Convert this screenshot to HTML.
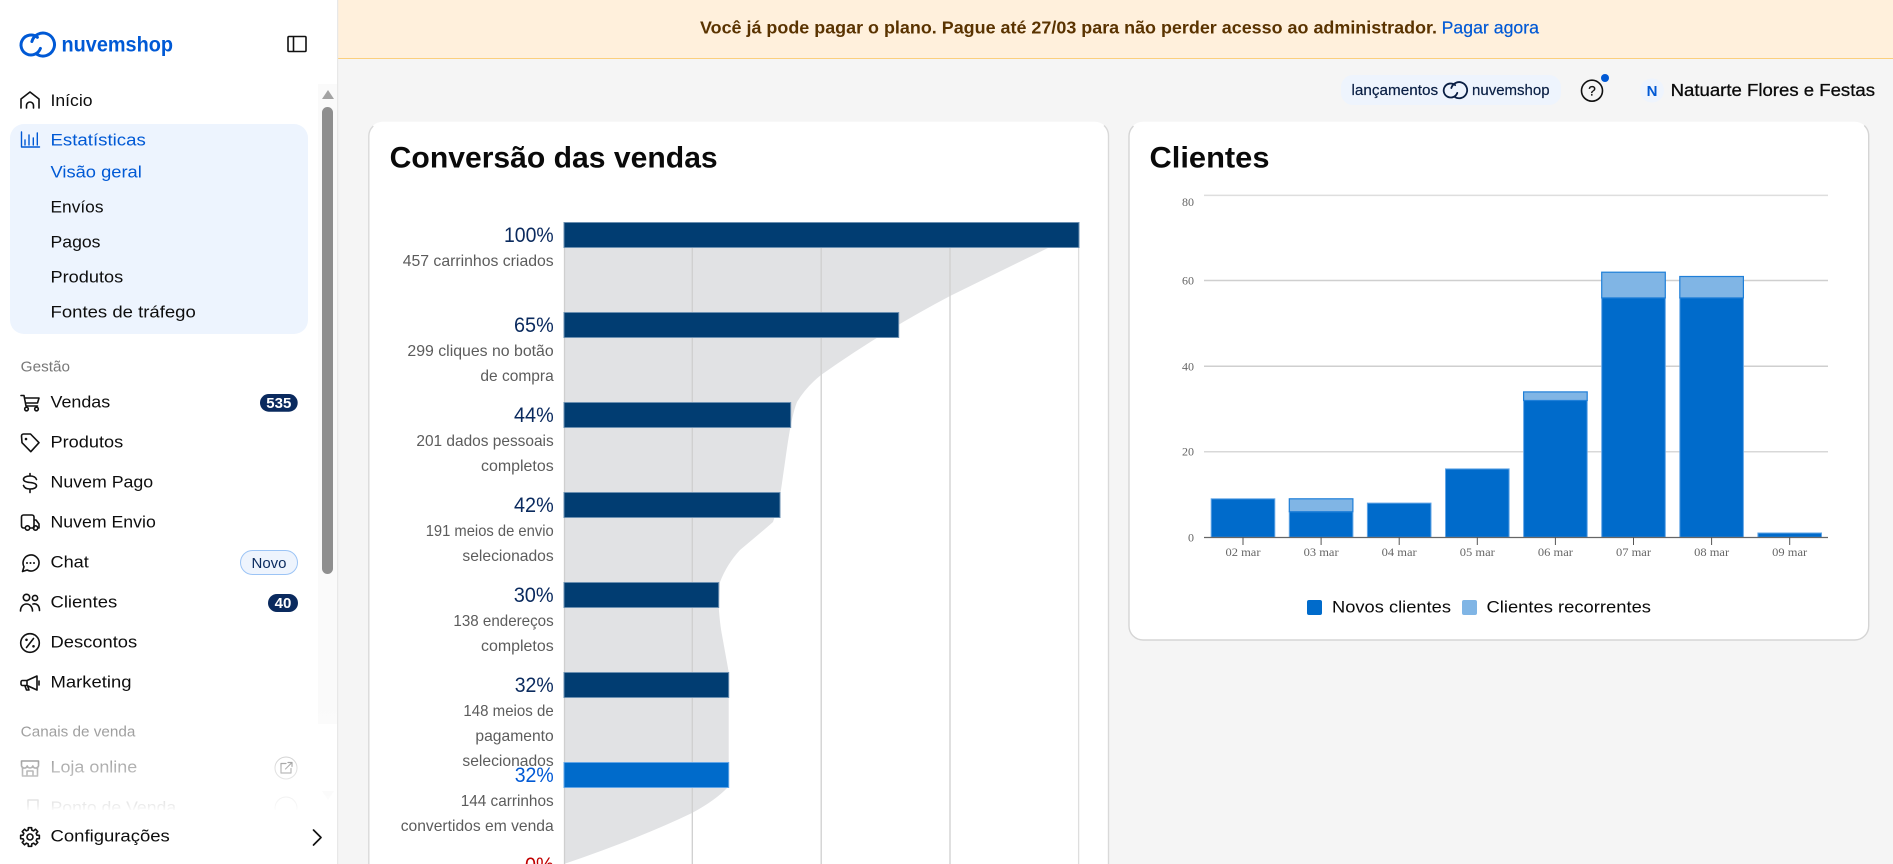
<!DOCTYPE html>
<html lang="pt-BR">
<head>
<meta charset="utf-8">
<title>Nuvemshop - Estatísticas</title>
<style>
html,body{margin:0;padding:0;width:1893px;height:864px;overflow:hidden;background:#f5f5f5}
svg{display:block}
text{font-family:"Liberation Sans",sans-serif}
.nav{font-size:17px;fill:#0d0d0d}
.act{font-size:17px;fill:#0059d5}
.sec{font-size:15px;fill:#777}
.ic{fill:none;stroke:#111;stroke-width:1.6;stroke-linecap:round;stroke-linejoin:round}
.pct{font-size:21px;fill:#0a2a5e;text-anchor:end;transform:translateY(-.8px)}
.sub{font-size:16px;fill:#5c5c5c;text-anchor:end;transform:translateY(-.7px)}
.ax{font-family:"Liberation Serif",serif;font-size:12px;fill:#666}
.axr{font-family:"Liberation Serif",serif;font-size:12px;fill:#666;text-anchor:end}
.gx{stroke:#cfcfcf;stroke-width:1.3}
.gy{stroke:#cfcfcf;stroke-width:1.5}
.nb{fill:#013d72;stroke:#6b8fb0;stroke-width:1}
.nw{fill:#006bcb;stroke:#62a5e6;stroke-width:1}
.rc{fill:#80b5e5;stroke:#1f7fd8;stroke-width:1.2}
.tk{stroke:#555;stroke-width:1}
</style>
</head>
<body>
<svg width="1893" height="864" viewBox="0 0 1893 864" xmlns="http://www.w3.org/2000/svg">
<defs>
<linearGradient id="fade" x1="0" y1="0" x2="0" y2="1">
<stop offset="0" stop-color="#fff" stop-opacity="0"/>
<stop offset="0.29" stop-color="#fff" stop-opacity="0.3"/>
<stop offset="0.6" stop-color="#fff" stop-opacity="0.68"/>
<stop offset="0.94" stop-color="#fff" stop-opacity="0.92"/>
<stop offset="1" stop-color="#fff" stop-opacity="1"/>
</linearGradient>
</defs>

<rect x="0" y="0" width="1893" height="864" fill="#f5f5f5"/>

<!-- banner -->
<g>
<rect x="338" y="0" width="1555" height="58" fill="#fff0dc"/>
<rect x="338" y="58" width="1555" height="1" fill="#fbcf7d"/>
<text x="700" y="33.5" font-size="17.6" font-weight="700" fill="#5a3300" textLength="737" lengthAdjust="spacingAndGlyphs">Você já pode pagar o plano. Pague até 27/03 para não perder acesso ao administrador.</text>
<text x="1441.6" y="33.5" font-size="17.6" fill="#0059d5" stroke="#0059d5" stroke-width=".2" textLength="97.4" lengthAdjust="spacingAndGlyphs">Pagar agora</text>
</g>

<!-- header -->
<g>
<rect x="1341" y="75" width="220" height="30" rx="12" fill="#eef4fd"/>
<text x="1351.5" y="95" font-size="15" fill="#0a1f44" stroke="#0a1f44" stroke-width=".2" textLength="86.6" lengthAdjust="spacingAndGlyphs">lançamentos</text>
<g fill="none" stroke="#0a1f44" stroke-width="2.6" stroke-linecap="round" transform="translate(1429 59) scale(.7)">
<path d="M37.400 37.300A10 10 0 1 0 40.400 48.400"/>
<path d="M31.900 41.500A11.500 11.500 0 1 1 37.250 54.500"/>
</g>
<text x="1472" y="95" font-size="15" fill="#0a1f44" stroke="#0a1f44" stroke-width=".2" textLength="77.6" lengthAdjust="spacingAndGlyphs">nuvemshop</text>
<circle cx="1592" cy="90.700" r="10.500" fill="none" stroke="#111" stroke-width="1.600"/>
<text x="1592" y="95.500" font-size="13.500" fill="#111" stroke="#111" stroke-width=".3" text-anchor="middle">?</text>
<circle cx="1605" cy="78" r="4" fill="#0059d5"/>
<circle cx="1652" cy="90.500" r="12" fill="#eef4fd"/>
<text x="1652" y="96" font-size="15" font-weight="700" fill="#0059d5" text-anchor="middle">N</text>
<text x="1670.600" y="96" font-size="17.400" fill="#0a0a0a" stroke="#0a0a0a" stroke-width=".3" textLength="204.4" lengthAdjust="spacingAndGlyphs">Natuarte Flores e Festas</text>
</g>

<!-- funnel card -->
<g>
<rect x="368.700" y="121.700" width="740" height="760" rx="14" fill="#fff"/>
<path d="M368.800 880V136a14 14 0 0 1 4.500-10M1104 125.500a14 14 0 0 1 4.500 10.500V880" fill="none" stroke="#d9d9d9" stroke-width="1.400"/>
<text x="389.700" y="167.500" font-size="30" font-weight="700" fill="#0a0a0a" textLength="328" lengthAdjust="spacingAndGlyphs">Conversão das vendas</text>

<path fill="#e1e2e4" d="M564 247H1050L950 296Q880 333 821 375Q806 387 797 402C790 420 787 450 782 483Q779 505 773 522Q764 530 740 550Q727 564 720 582L718.700 607Q720 625 722 635L728.700 672V787H728Q716 800 692 813Q640 838 564 864Z"/>
<line class="gx" x1="564.500" y1="222" x2="564.500" y2="864"/>
<line class="gx" x1="692.300" y1="222" x2="692.300" y2="864"/>
<line class="gx" x1="821.200" y1="222" x2="821.200" y2="864"/>
<line class="gx" x1="950" y1="222" x2="950" y2="864"/>
<line class="gx" x1="1078.600" y1="222" x2="1078.600" y2="864" style="stroke:#dedede"/>

<rect class="nb" x="564" y="222.500" width="515" height="25"/>
<rect class="nb" x="564" y="312.500" width="334.700" height="25"/>
<rect class="nb" x="564" y="402.500" width="226.700" height="25"/>
<rect class="nb" x="564" y="492.500" width="216" height="25"/>
<rect class="nb" x="564" y="582.500" width="154.700" height="25"/>
<rect class="nb" x="564" y="672.500" width="164.700" height="25"/>
<rect x="564" y="762.500" width="164.700" height="25" fill="#006bcb" stroke="#62a5e6" stroke-width="1"/>

<text class="pct" x="553.700" y="242.700" textLength="49.700" lengthAdjust="spacingAndGlyphs">100%</text>
<text class="sub" x="553.700" y="266.700" textLength="151" lengthAdjust="spacingAndGlyphs">457 carrinhos criados</text>

<text class="pct" x="553.700" y="332.700" textLength="39.700" lengthAdjust="spacingAndGlyphs">65%</text>
<text class="sub" x="553.700" y="356.700" textLength="146.300" lengthAdjust="spacingAndGlyphs">299 cliques no botão</text>
<text class="sub" x="553.700" y="381.700" textLength="73.300" lengthAdjust="spacingAndGlyphs">de compra</text>

<text class="pct" x="553.700" y="422.700" textLength="39.700" lengthAdjust="spacingAndGlyphs">44%</text>
<text class="sub" x="553.700" y="446.700" textLength="137.300" lengthAdjust="spacingAndGlyphs">201 dados pessoais</text>
<text class="sub" x="553.700" y="471.700" textLength="72.700" lengthAdjust="spacingAndGlyphs">completos</text>

<text class="pct" x="553.700" y="512.700" textLength="39.700" lengthAdjust="spacingAndGlyphs">42%</text>
<text class="sub" x="553.700" y="536.700" textLength="128" lengthAdjust="spacingAndGlyphs">191 meios de envio</text>
<text class="sub" x="553.700" y="561.700" textLength="91.300" lengthAdjust="spacingAndGlyphs">selecionados</text>

<text class="pct" x="553.700" y="602.700" textLength="40" lengthAdjust="spacingAndGlyphs">30%</text>
<text class="sub" x="553.700" y="626.700" textLength="100.300" lengthAdjust="spacingAndGlyphs">138 endereços</text>
<text class="sub" x="553.700" y="651.700" textLength="72.700" lengthAdjust="spacingAndGlyphs">completos</text>

<text class="pct" x="553.700" y="692.700" textLength="39" lengthAdjust="spacingAndGlyphs">32%</text>
<text class="sub" x="553.700" y="716.700" textLength="90.300" lengthAdjust="spacingAndGlyphs">148 meios de</text>
<text class="sub" x="553.700" y="741.700" textLength="78.300" lengthAdjust="spacingAndGlyphs">pagamento</text>
<text class="sub" x="553.700" y="766.700" textLength="91.300" lengthAdjust="spacingAndGlyphs">selecionados</text>

<text class="pct" x="553.700" y="782.700" textLength="39" lengthAdjust="spacingAndGlyphs" style="fill:#0059d5">32%</text>
<text class="sub" x="553.700" y="806.700" textLength="93" lengthAdjust="spacingAndGlyphs">144 carrinhos</text>
<text class="sub" x="553.700" y="831.700" textLength="153" lengthAdjust="spacingAndGlyphs">convertidos em venda</text>

<text class="pct" x="553.700" y="872.700" textLength="28.700" lengthAdjust="spacingAndGlyphs" style="fill:#c00000">0%</text>
</g>

<!-- clientes card -->
<g>
<rect x="1129" y="121.700" width="739.700" height="518.300" rx="14" fill="#fff"/>
<path d="M1129 136a14 14 0 0 1 4.500-10M1129 136V626a14 14 0 0 0 14 14H1854.700a14 14 0 0 0 14-14V136a14 14 0 0 0-4.500-10.500" fill="none" stroke="#d5d5d5" stroke-width="1.400"/>
<text x="1149.500" y="167.500" font-size="30" font-weight="700" fill="#0a0a0a" textLength="120" lengthAdjust="spacingAndGlyphs">Clientes</text>

<line class="gy" x1="1204" y1="195.400" x2="1828" y2="195.400" style="stroke:#dedede"/>
<line class="gy" x1="1204" y1="280.500" x2="1828" y2="280.500"/>
<line class="gy" x1="1204" y1="366.300" x2="1828" y2="366.300"/>
<line class="gy" x1="1204" y1="451.800" x2="1828" y2="451.800" style="stroke:#d8d8d8"/>

<text class="axr" x="1194" y="206">80</text>
<text class="axr" x="1194" y="284.500">60</text>
<text class="axr" x="1194" y="370.500">40</text>
<text class="axr" x="1194" y="455.500">20</text>
<text class="axr" x="1194" y="541.500">0</text>

<rect class="nw" x="1211.200" y="498.800" width="63.600" height="38.500"/>
<rect class="nw" x="1289.300" y="511.700" width="63.600" height="25.600"/>
<rect class="rc" x="1289.300" y="498.800" width="63.600" height="12.900"/>
<rect class="nw" x="1367.400" y="503.100" width="63.600" height="34.200"/>
<rect class="nw" x="1445.500" y="468.900" width="63.600" height="68.400"/>
<rect class="nw" x="1523.600" y="400.500" width="63.600" height="136.800"/>
<rect class="rc" x="1523.600" y="391.900" width="63.600" height="8.600"/>
<rect class="nw" x="1601.700" y="297.900" width="63.600" height="239.400"/>
<rect class="rc" x="1601.700" y="272.200" width="63.600" height="25.700"/>
<rect class="nw" x="1679.800" y="297.900" width="63.600" height="239.400"/>
<rect class="rc" x="1679.800" y="276.500" width="63.600" height="21.400"/>
<rect class="nw" x="1757.900" y="533" width="63.600" height="4.300"/>

<line x1="1204" y1="537.500" x2="1828" y2="537.500" stroke="#666" stroke-width="1.300"/>
<g>
<line class="tk" x1="1243" y1="537" x2="1243" y2="545"/>
<line class="tk" x1="1321.100" y1="537" x2="1321.100" y2="545"/>
<line class="tk" x1="1399.200" y1="537" x2="1399.200" y2="545"/>
<line class="tk" x1="1477.300" y1="537" x2="1477.300" y2="545"/>
<line class="tk" x1="1555.400" y1="537" x2="1555.400" y2="545"/>
<line class="tk" x1="1633.500" y1="537" x2="1633.500" y2="545"/>
<line class="tk" x1="1711.600" y1="537" x2="1711.600" y2="545"/>
<line class="tk" x1="1789.700" y1="537" x2="1789.700" y2="545"/>
</g>
<g text-anchor="middle">
<text class="ax" x="1243" y="556" textLength="35" lengthAdjust="spacingAndGlyphs">02 mar</text>
<text class="ax" x="1321.100" y="556" textLength="35" lengthAdjust="spacingAndGlyphs">03 mar</text>
<text class="ax" x="1399.200" y="556" textLength="35" lengthAdjust="spacingAndGlyphs">04 mar</text>
<text class="ax" x="1477.300" y="556" textLength="35" lengthAdjust="spacingAndGlyphs">05 mar</text>
<text class="ax" x="1555.400" y="556" textLength="35" lengthAdjust="spacingAndGlyphs">06 mar</text>
<text class="ax" x="1633.500" y="556" textLength="35" lengthAdjust="spacingAndGlyphs">07 mar</text>
<text class="ax" x="1711.600" y="556" textLength="35" lengthAdjust="spacingAndGlyphs">08 mar</text>
<text class="ax" x="1789.700" y="556" textLength="35" lengthAdjust="spacingAndGlyphs">09 mar</text>
</g>

<rect x="1307" y="600" width="15" height="15" rx="2" fill="#006bcb"/>
<text x="1332" y="612.500" font-size="17" fill="#0a0a0a" textLength="119" lengthAdjust="spacingAndGlyphs">Novos clientes</text>
<rect x="1462" y="600" width="15" height="15" rx="2" fill="#80b5e5"/>
<text x="1486.500" y="612.500" font-size="17" fill="#0a0a0a" textLength="164.500" lengthAdjust="spacingAndGlyphs">Clientes recorrentes</text>
</g>

<!-- sidebar -->
<g>
<rect x="0" y="0" width="337" height="864" fill="#fff"/>
<rect x="337" y="0" width="1.200" height="864" fill="#e8e8e8"/>

<g fill="none" stroke="#0059d5" stroke-width="3" stroke-linecap="round">
<path d="M37.400 37.300A10 10 0 1 0 40.400 48.400"/>
<path d="M31.900 41.500A11.500 11.500 0 1 1 37.250 54.500"/>
</g>
<text x="61.500" y="51.500" font-size="21" font-weight="700" fill="#0059d5" textLength="111.500" lengthAdjust="spacingAndGlyphs">nuvemshop</text>

<rect x="288" y="36.500" width="18" height="15" rx="1" fill="none" stroke="#111" stroke-width="1.600"/>
<line x1="293.500" y1="36.500" x2="293.500" y2="51.500" stroke="#111" stroke-width="1.600"/>

<!-- scrollbar -->
<rect x="318" y="84" width="19" height="640" fill="#fafafa"/>
<path d="M328 90 334 99H322Z" fill="#a3a3a3"/>
<rect x="322" y="107" width="11" height="467" rx="5.500" fill="#8f8f8f"/>
<path d="M322 791H334L328 800Z" fill="#e6e6e6"/>

<rect x="10" y="124" width="298" height="210" rx="14" fill="#edf4fe"/>

<path class="ic" d="M21 108V99L30 92 39 99V108M26.500 108V105.500a3.500 3.500 0 0 1 7 0V108"/>
<text class="nav" x="50.500" y="106" textLength="42" lengthAdjust="spacingAndGlyphs">Início</text>

<path class="ic" style="stroke:#0059d5;stroke-width:1.400" d="M21.500 132V147H39.500M25 145V140M29 145V135M33.300 145V138M37.300 145V133"/>
<text class="act" x="50.500" y="145.500" textLength="95.300" lengthAdjust="spacingAndGlyphs">Estatísticas</text>
<text class="act" x="50.500" y="177.500" textLength="91.300" lengthAdjust="spacingAndGlyphs">Visão geral</text>
<text class="nav" x="50.500" y="212.500" textLength="53" lengthAdjust="spacingAndGlyphs">Envíos</text>
<text class="nav" x="50.500" y="247.500" textLength="50" lengthAdjust="spacingAndGlyphs">Pagos</text>
<text class="nav" x="50.500" y="282.500" textLength="72.700" lengthAdjust="spacingAndGlyphs">Produtos</text>
<text class="nav" x="50.500" y="317.500" textLength="145.300" lengthAdjust="spacingAndGlyphs">Fontes de tráfego</text>

<text class="sec" x="20.700" y="371.700" textLength="49.300" lengthAdjust="spacingAndGlyphs">Gestão</text>

<path class="ic" d="M21 395.500H24L26 406H37.500M24.800 398H39L37.500 403H26"/>
<circle class="ic" cx="26.500" cy="409" r="1.800"/>
<circle class="ic" cx="36.500" cy="409" r="1.800"/>
<text class="nav" x="50.500" y="407.500" textLength="59.700" lengthAdjust="spacingAndGlyphs">Vendas</text>
<rect x="260" y="394" width="37.700" height="17.700" rx="8.800" fill="#0a2a5e"/>
<text x="278.800" y="408" font-size="15" font-weight="700" fill="#fff" text-anchor="middle">535</text>

<path class="ic" d="M21.500 436a2 2 0 0 1 2-2h7l8.500 8.700-8.200 9-8.800-9z"/>
<circle cx="26" cy="439" r="1.300" fill="#111"/>
<text class="nav" x="50.500" y="447.500" textLength="72.700" lengthAdjust="spacingAndGlyphs">Produtos</text>

<path class="ic" d="M36.500 479.500c-.7-2-3-3.500-6.500-3.500-4 0-6.500 1.500-6.500 3.300s2.500 2.900 6.500 3.200 6.500 1.400 6.500 3.300-2.500 3.200-6.500 3.200c-3.500 0-5.800-1.400-6.500-3.500M30 473.500V476M30 489.500V492.500"/>
<text class="nav" x="50.500" y="487.500" textLength="102.700" lengthAdjust="spacingAndGlyphs">Nuvem Pago</text>

<path class="ic" d="M25 528H23.500a2 2 0 0 1-2-2V517a2 2 0 0 1 2-2H32a2 2 0 0 1 2 2V528H30M34 520H36L39 524V528H38"/>
<circle class="ic" cx="27.500" cy="528" r="2.200"/>
<circle class="ic" cx="35.500" cy="528" r="2.200"/>
<text class="nav" x="50.500" y="527.500" textLength="105.300" lengthAdjust="spacingAndGlyphs">Nuvem Envio</text>

<path class="ic" d="M22.500 571.500L24 566.800a8 8 0 1 1 3.200 3.200Z"/>
<circle cx="27" cy="563" r="1" fill="#111"/><circle cx="30.500" cy="563" r="1" fill="#111"/><circle cx="34" cy="563" r="1" fill="#111"/>
<text class="nav" x="50.500" y="567.500" textLength="38.300" lengthAdjust="spacingAndGlyphs">Chat</text>
<rect x="240.500" y="550.500" width="57" height="24" rx="12" fill="#eef4fd" stroke="#9cc4f5"/>
<text x="269" y="568" font-size="15" fill="#0a2a5e" text-anchor="middle">Novo</text>

<circle class="ic" cx="26.500" cy="597.500" r="3.200"/>
<circle class="ic" cx="35" cy="598" r="2.600"/>
<path class="ic" d="M20.500 611c0-4 2.500-7 6-7s6 3 6 7M33 604c3.500-1 6.500 1.500 6.500 6.500"/>
<text class="nav" x="50.500" y="607.500" textLength="66.700" lengthAdjust="spacingAndGlyphs">Clientes</text>
<rect x="268" y="594" width="30" height="18" rx="9" fill="#0a2a5e"/>
<text x="283" y="608" font-size="15" font-weight="700" fill="#fff" text-anchor="middle">40</text>

<circle class="ic" cx="30" cy="643" r="9.300"/>
<path class="ic" d="M26.500 647.500L33.500 638.500"/>
<circle cx="26.500" cy="639.800" r="1.300" fill="#111"/><circle cx="33.500" cy="646.300" r="1.300" fill="#111"/>
<text class="nav" x="50.500" y="647.500" textLength="86.700" lengthAdjust="spacingAndGlyphs">Descontos</text>

<path class="ic" d="M37 676L27 680.500H22.500A1.500 1.500 0 0 0 21 682V684A1.500 1.500 0 0 0 22.500 685.500H27L37 690ZM25 686L26.500 690H29L27.800 686.500M39 681V685M27 680.500V685.500"/>
<text class="nav" x="50.500" y="687.500" textLength="81" lengthAdjust="spacingAndGlyphs">Marketing</text>

<text class="sec" x="20.700" y="736.700" textLength="114.700" lengthAdjust="spacingAndGlyphs">Canais de venda</text>

<path class="ic" d="M21.500 761H38.500V766a3 3 0 0 1-5.700 0 3 3 0 0 1-5.600 0 3 3 0 0 1-5.700 0ZM22.500 767V776H37.500V767M27 776V771H33V776"/>
<text class="nav" x="50.500" y="772.700" textLength="86.700" lengthAdjust="spacingAndGlyphs">Loja online</text>
<circle cx="286" cy="768" r="11" fill="none" stroke="#999" stroke-width="1"/>
<path class="ic" style="stroke-width:1.200" d="M286 763.500H281V773H291V768.500M285.500 769L292 762.500M288 762.500H292V766.500"/>

<path class="ic" d="M28 800H38V816H28Z"/>
<text class="nav" x="50.500" y="813" textLength="125.700" lengthAdjust="spacingAndGlyphs">Ponto de Venda</text>
<circle cx="286" cy="808" r="11" fill="none" stroke="#999" stroke-width="1"/>

<rect x="0" y="700" width="337" height="112" fill="url(#fade)"/>
<rect x="0" y="810" width="337" height="54" fill="#fff"/>

<polygon class="ic" transform="translate(30 837)" points="9.36,-1.65 9.36,1.65 6.99,1.74 6.17,3.71 7.78,5.45 5.45,7.78 3.71,6.17 1.74,6.99 1.65,9.36 -1.65,9.36 -1.74,6.99 -3.71,6.17 -5.45,7.78 -7.78,5.45 -6.17,3.71 -6.99,1.74 -9.36,1.65 -9.36,-1.65 -6.99,-1.74 -6.17,-3.71 -7.78,-5.45 -5.45,-7.78 -3.71,-6.17 -1.74,-6.99 -1.65,-9.36 1.65,-9.36 1.74,-6.99 3.71,-6.17 5.45,-7.78 7.78,-5.45 6.17,-3.71 6.99,-1.74"/>
<circle class="ic" cx="30" cy="837" r="3"/>
<text class="nav" x="50.500" y="841.700" textLength="119.300" lengthAdjust="spacingAndGlyphs">Configurações</text>
<path class="ic" style="stroke-width:1.700" d="M313.500 830L321 837.500 313.500 845"/>
</g>
</svg>
</body>
</html>
